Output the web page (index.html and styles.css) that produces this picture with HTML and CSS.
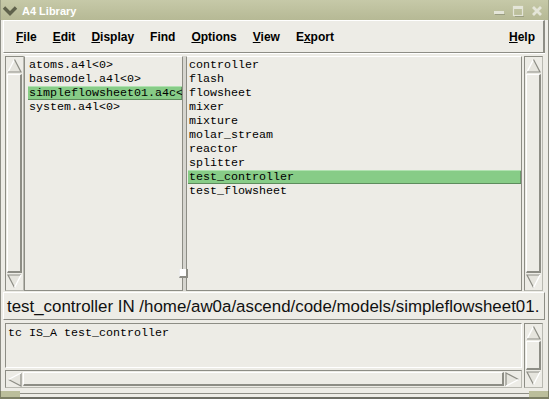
FILE: index.html
```html
<!DOCTYPE html>
<html>
<head>
<meta charset="utf-8">
<title>A4 Library</title>
<link rel="stylesheet" href="styles.css">
</head>
<body>
<div class="window">
  <div class="titlebar">
    <svg class="chev" width="16" height="10" viewBox="0 0 16 10"><polyline points="2,1.5 8,7.5 14,1.5" fill="none" stroke="#5f624c" stroke-width="3.4"/></svg>
    <span class="title">A4 Library</span>
    <div class="wbtns">
      <svg width="12" height="12" viewBox="0 0 12 12"><rect x="1" y="6" width="10" height="3" fill="#e4e5d8"/><rect x="2" y="9" width="10" height="1" fill="#9a9d82"/></svg>
      <svg width="12" height="12" viewBox="0 0 12 12"><rect x="1.5" y="1.5" width="9" height="9" fill="none" stroke="#e4e5d8" stroke-width="1.2"/><rect x="1" y="1" width="10" height="3" fill="#e4e5d8"/><line x1="3" y1="11.5" x2="12" y2="11.5" stroke="#9a9d82"/></svg>
      <svg width="12" height="12" viewBox="0 0 12 12"><path d="M2 2 L10 10 M10 2 L2 10" stroke="#e4e5d8" stroke-width="2.8"/></svg>
    </div>
  </div>
  <div class="frame">
    <div class="menubar">
      <span class="mi"><u>F</u>ile</span>
      <span class="mi"><u>E</u>dit</span>
      <span class="mi"><u>D</u>isplay</span>
      <span class="mi">Find</span>
      <span class="mi"><u>O</u>ptions</span>
      <span class="mi"><u>V</u>iew</span>
      <span class="mi">E<u>x</u>port</span>
      <span class="mi help"><u>H</u>elp</span>
    </div>

    <div class="lists">
      <div class="vsb">
        <svg class="arr" width="15" height="15" viewBox="0 0 15 15"><polygon points="7.5,1.5 14,14 1,14" fill="#e6e5de"/><line x1="7.5" y1="1.5" x2="1" y2="14" stroke="#fff" stroke-width="1.4"/><polyline points="7.5,1.5 14,14 1,14" fill="none" stroke="#8d8d85" stroke-width="1.2"/></svg>
        <div class="thumb"></div>
        <svg class="arr" width="15" height="15" viewBox="0 0 15 15"><polygon points="1,1 14,1 7.5,13.5" fill="#e6e5de"/><polyline points="14,1 1,1 7.5,13.5" fill="none" stroke="#8d8d85" stroke-width="1.2"/><line x1="14" y1="1" x2="7.5" y2="13.5" stroke="#fff" stroke-width="1.4"/></svg>
      </div>
      <div class="list left">
        <div class="row">atoms.a4l&lt;0&gt;</div>
        <div class="row">basemodel.a4l&lt;0&gt;</div>
        <div class="row sel">simpleflowsheet01.a4c&lt;0&gt;</div>
        <div class="row">system.a4l&lt;0&gt;</div>
      </div>
      <div class="sash"><span class="handle"></span></div>
      <div class="list right">
        <div class="row">controller</div>
        <div class="row">flash</div>
        <div class="row">flowsheet</div>
        <div class="row">mixer</div>
        <div class="row">mixture</div>
        <div class="row">molar_stream</div>
        <div class="row">reactor</div>
        <div class="row">splitter</div>
        <div class="row sel">test_controller</div>
        <div class="row">test_flowsheet</div>
      </div>
      <div class="vsb">
        <svg class="arr" width="15" height="15" viewBox="0 0 15 15"><polygon points="7.5,1.5 14,14 1,14" fill="#e6e5de"/><line x1="7.5" y1="1.5" x2="1" y2="14" stroke="#fff" stroke-width="1.4"/><polyline points="7.5,1.5 14,14 1,14" fill="none" stroke="#8d8d85" stroke-width="1.2"/></svg>
        <div class="thumb"></div>
        <svg class="arr" width="15" height="15" viewBox="0 0 15 15"><polygon points="1,1 14,1 7.5,13.5" fill="#e6e5de"/><polyline points="14,1 1,1 7.5,13.5" fill="none" stroke="#8d8d85" stroke-width="1.2"/><line x1="14" y1="1" x2="7.5" y2="13.5" stroke="#fff" stroke-width="1.4"/></svg>
      </div>
    </div>

    <div class="status">test_controller IN /home/aw0a/ascend/code/models/simpleflowsheet01.</div>

    <div class="lower">
      <div class="lower-main">
        <div class="text"><div class="row">tc IS_A test_controller</div></div>
        <div class="hsb">
          <svg class="arr" width="15" height="15" viewBox="0 0 15 15"><polygon points="1.5,7.5 14,1 14,14" fill="#e6e5de"/><polyline points="1.5,7.5 14,14 14,1" fill="none" stroke="#8d8d85" stroke-width="1.2"/><line x1="1.5" y1="7.5" x2="14" y2="1" stroke="#fff" stroke-width="1.4"/></svg>
          <div class="hthumb"></div>
          <svg class="arr" width="15" height="15" viewBox="0 0 15 15"><polygon points="1,1 13.5,7.5 1,14" fill="#e6e5de"/><polyline points="1,14 1,1 13.5,7.5" fill="none" stroke="#8d8d85" stroke-width="1.2"/><line x1="13.5" y1="7.5" x2="1" y2="14" stroke="#fff" stroke-width="1.4"/></svg>
        </div>
      </div>
      <div class="vsb">
        <svg class="arr" width="15" height="15" viewBox="0 0 15 15"><polygon points="7.5,1.5 14,14 1,14" fill="#e6e5de"/><line x1="7.5" y1="1.5" x2="1" y2="14" stroke="#fff" stroke-width="1.4"/><polyline points="7.5,1.5 14,14 1,14" fill="none" stroke="#8d8d85" stroke-width="1.2"/></svg>
        <div class="thumb"></div>
        <svg class="arr" width="15" height="15" viewBox="0 0 15 15"><polygon points="1,1 14,1 7.5,13.5" fill="#e6e5de"/><polyline points="14,1 1,1 7.5,13.5" fill="none" stroke="#8d8d85" stroke-width="1.2"/><line x1="14" y1="1" x2="7.5" y2="13.5" stroke="#fff" stroke-width="1.4"/></svg>
      </div>
    </div>
  </div>
  <div class="wbottom"></div>
  <span class="grip grip-l"></span>
  <span class="grip grip-r"></span>
</div>
</body>
</html>
```

FILE: styles.css
```css
* { box-sizing: border-box; }
html, body { margin: 0; padding: 0; }
body { width: 549px; height: 399px; overflow: hidden; background: #edece6; }

.window {
  position: relative;
  width: 549px;
  height: 399px;
  display: flex;
  flex-direction: column;
  background: #edece6;
  font-family: "Liberation Sans", Arial, sans-serif;
}

/* title bar */
.titlebar {
  height: 20px;
  flex: none;
  display: flex;
  align-items: center;
  background: linear-gradient(#c6c9a8, #b6b995);
  border-left: 1px solid #9ea187;
  border-right: 1px solid #9ea187;
}
.chev { margin-left: 1px; margin-top: 1px; flex: none; }
.title {
  margin-left: 4px;
  color: #ffffff;
  font-weight: bold;
  font-size: 11px;
  line-height: 14px;
  margin-top: 1px;
}
.wbtns {
  margin-left: auto;
  display: flex;
  gap: 7px;
  padding-right: 5px;
  margin-top: 1px;
}

/* window frame */
.frame {
  flex: 1;
  display: flex;
  flex-direction: column;
  border-left: 1px solid #8d8d85;
  border-right: 1px solid #8d8d85;
  border-bottom: 1px solid #8d8d85;
  padding: 0 3px 3px 2px;
}

/* menu bar */
.menubar {
  height: 33px;
  flex: none;
  display: flex;
  gap: 16px;
  padding: 9px 8px 0 12px;
  border-top: 1px solid #ffffff;
  border-left: 1px solid #ffffff;
  border-right: 2px solid #8d8d85;
  border-bottom: 1px solid #8d8d85;
  font-size: 12px;
  font-weight: bold;
  line-height: 14px;
  color: #000;
}
.mi u { text-decoration-thickness: 1px; text-underline-offset: 1px; }
.mi.help { margin-left: auto; }

/* lists */
.lists {
  height: 239px;
  flex: none;
  display: flex;
  padding: 2px 2px 1px 2px;
  border-top: 1px solid #ffffff;
}
.vsb {
  width: 19px;
  flex: none;
  display: flex;
  flex-direction: column;
  border: 1px solid #8d8d85;
  border-right-color: #b9b9b1;
  border-bottom-color: #b9b9b1;
  padding: 1px;
}
.vsb .arr { display: block; flex: none; }
.vsb .thumb {
  flex: 1;
  margin: 1px 0;
  border-top: 1px solid #ffffff;
  border-left: 1px solid #ffffff;
  border-right: 2px solid #8d8d85;
  border-bottom: 2px solid #8d8d85;
}
.list {
  overflow: hidden;
  border: 1px solid #8d8d85;
  border-top-color: #ffffff;
  padding-top: 1px;
  font-family: "Liberation Mono", "Courier New", monospace;
  font-size: 11.67px;
  line-height: 14px;
  color: #000;
}
.list.left { width: 159px; flex: none; padding-left: 3px; }
.list.right { flex: 1; padding-left: 1px; margin-right: 2px; }
.row {
  height: 14px;
  white-space: pre;
  padding-left: 1px;
}
.list.left .row { overflow: hidden; }
.row.sel {
  background: #87cc87;
  box-shadow: inset 0 1px 0 #b1e2b1, inset 0 -1px 0 #5d8c5d, inset -1px 0 0 #6a996a;
}
.sash {
  position: relative;
  width: 3px;
  flex: none;
  background: #d6d5cf;
}
.handle {
  position: absolute;
  left: -4px;
  top: 213px;
  width: 9px;
  height: 9px;
  background: #ffffff;
  border-right: 2px solid #8d8d85;
  border-bottom: 2px solid #8d8d85;
  border-left: 1px solid #ededed;
}

/* status */
.status {
  height: 28px;
  flex: none;
  padding: 4px 0 0 3px;
  border-top: 1px solid #ffffff;
  border-left: 1px solid #ffffff;
  border-right: 1px solid #8d8d85;
  border-bottom: 1px solid #8d8d85;
  font-family: "Liberation Sans", Arial, sans-serif;
  font-size: 16.9px;
  line-height: 19px;
  white-space: nowrap;
  overflow: hidden;
  color: #111;
}

/* lower text area */
.lower {
  height: 70px;
  flex: none;
  display: flex;
  gap: 2px;
  padding: 3px 2px 2px 2px;
}
.lower-main {
  flex: 1;
  display: flex;
  flex-direction: column;
  gap: 2px;
}
.text {
  flex: 1;
  border: 1px solid #8d8d85;
  border-right-color: #ffffff;
  border-bottom-color: #ffffff;
  padding: 2px 0 0 1px;
  font-family: "Liberation Mono", "Courier New", monospace;
  font-size: 11.67px;
  line-height: 14px;
  color: #000;
}
.hsb {
  height: 18px;
  flex: none;
  display: flex;
  border: 1px solid #8d8d85;
  border-right-color: #b9b9b1;
  border-bottom-color: #b9b9b1;
  padding: 1px;
}
.hsb .arr { display: block; flex: none; }
.hthumb {
  flex: 1;
  margin: 0 1px;
  border-top: 1px solid #ffffff;
  border-left: 1px solid #ffffff;
  border-right: 2px solid #8d8d85;
  border-bottom: 2px solid #8d8d85;
}

.wbottom {
  height: 5px;
  flex: none;
  border-bottom: 2px solid #6e6f66;
  background: #edece6;
}
.grip {
  position: absolute;
  bottom: 0;
  height: 8px;
  background: #bbbe9b;
  border-bottom: 2px solid #7c7f64;
}
.grip-l { left: 0; width: 20px; border-left: 1px solid #7c7f64; }
.grip-r { right: 0; width: 20px; border-right: 1px solid #7c7f64; }
```
